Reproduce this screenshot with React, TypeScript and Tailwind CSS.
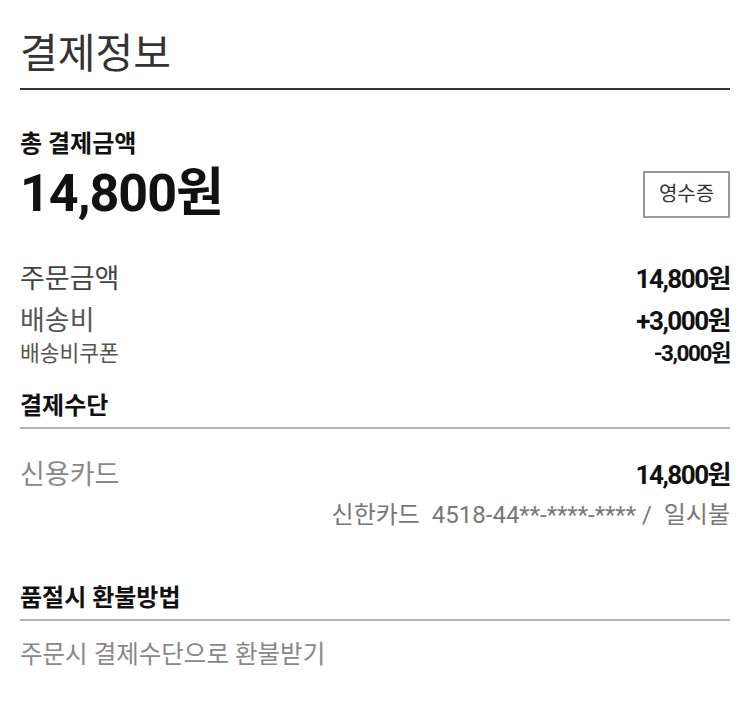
import React from "react";

const F = { fontFamily: 'Roboto, "Noto Sans CJK KR", sans-serif' };

export default function App() {
  return (
    <div className="w-[750px] h-[705px] bg-white px-[20px] pt-[34px]" style={F}>
      <h1 className="text-[41px] leading-none text-[#333] font-normal pb-[13px] border-b-2 border-[#333]">결제정보</h1>

      <div className="mt-[42px] text-[24px] leading-none font-bold text-[#111]">총 결제금액</div>
      <div className="mt-[12px] flex items-center justify-between h-[52px]">
        <div className="text-[52px] leading-none font-bold text-[#111] tracking-[-1px]">14,800원</div>
        <button className="w-[87px] h-[47px] border-2 border-[#999] bg-white text-[20px] text-[#333] leading-none">영수증</button>
      </div>

      <div className="mt-[46px] flex items-baseline justify-between leading-none">
        <span className="text-[27px] text-[#444]">주문금액</span>
        <span className="text-[26px] font-bold text-[#111] tracking-[-1.5px]">14,800원</span>
      </div>
      <div className="mt-[15px] flex items-baseline justify-between leading-none">
        <span className="text-[27px] text-[#555]">배송비</span>
        <span className="text-[26px] font-bold text-[#111] tracking-[-1.5px]">+3,000원</span>
      </div>
      <div className="mt-[7px] flex items-baseline justify-between leading-none">
        <span className="text-[21.5px] text-[#555]">배송비쿠폰</span>
        <span className="text-[22.5px] font-bold text-[#111] tracking-[-1.5px]">-3,000원</span>
      </div>

      <div className="mt-[29px] text-[24px] leading-none font-bold text-[#111] pb-[9px] border-b-2 border-[#b3b3b3]">결제수단</div>
      <div className="mt-[33px] flex items-baseline justify-between leading-none">
        <span className="text-[27px] text-[#888]">신용카드</span>
        <span className="text-[26px] font-bold text-[#111] tracking-[-1.5px]">14,800원</span>
      </div>
      <div className="mt-[14px] text-right text-[24px] leading-none text-[#777] whitespace-pre">신한카드  4518-44**-****-**** /  일시불</div>

      <div className="mt-[59px] text-[24px] leading-none font-bold text-[#111] pb-[9px] border-b-2 border-[#b3b3b3]">품절시 환불방법</div>
      <div className="mt-[22px] text-[24.5px] leading-none text-[#888]">주문시 결제수단으로 환불받기</div>
    </div>
  );
}
